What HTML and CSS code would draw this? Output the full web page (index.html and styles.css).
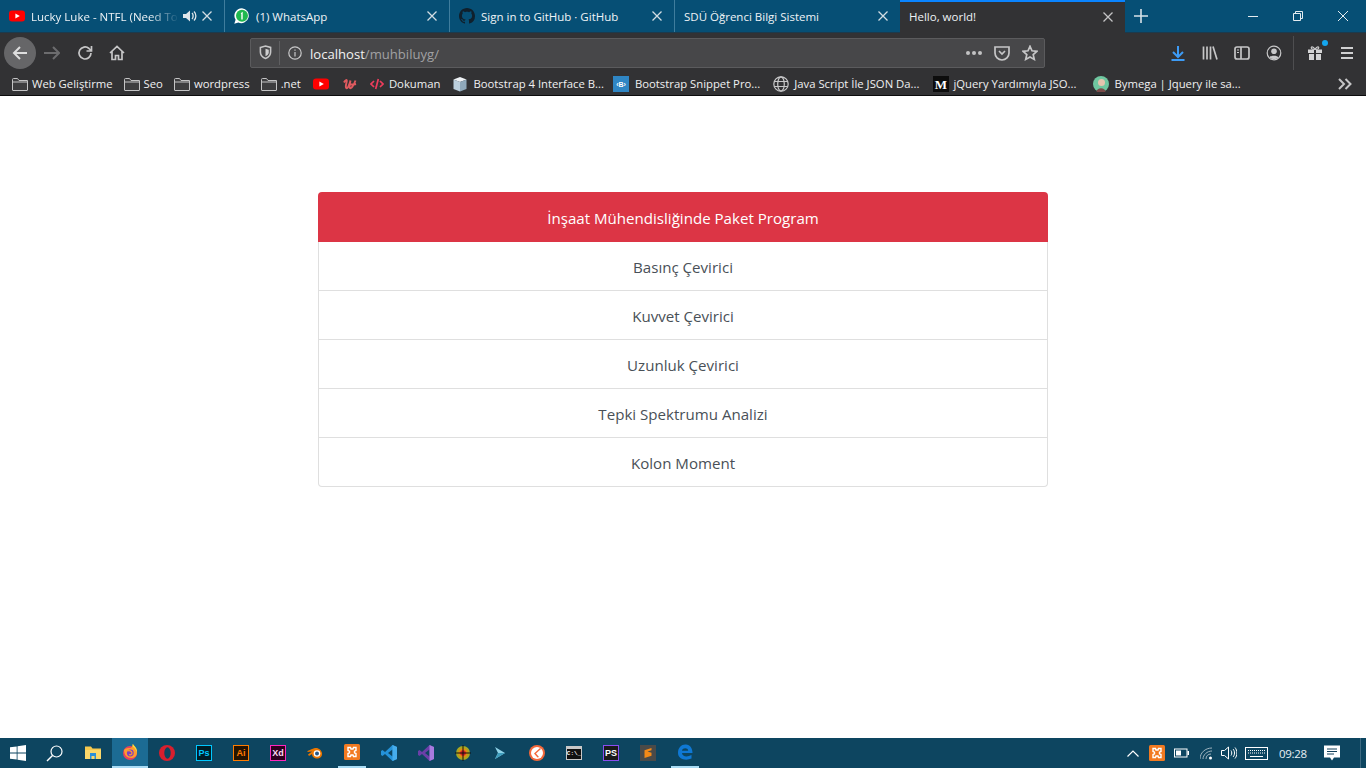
FILE: index.html
```html
<!DOCTYPE html>
<html lang="tr">
<head>
<meta charset="utf-8">
<title>Hello, world!</title>
<link rel="stylesheet" href="styles.css">
</head>
<body>
<header class="browser">
  <div class="tabstrip">
    <div class="tab">
      <svg class="ico16" viewBox="0 0 16 16"><rect y="2.500" width="16" height="11" rx="3" fill="#f00"/><path d="M6.400 5.500v5L10.800 8z" fill="#fff"/></svg>
      <span class="tab-title fade">Lucky Luke - NTFL (Need To</span>
      <svg class="speaker" viewBox="0 0 14 12"><path d="M0 4h3l4-3.500v11L3 8H0z" fill="#dfe6ea"/><path d="M9 3c1.500 1.500 1.500 4.500 0 6M11 1.500c2.500 2.500 2.500 6.500 0 9" fill="none" stroke="#dfe6ea" stroke-width="1.300"/></svg>
      <svg class="close" viewBox="0 0 10 10"><path d="M.5.500l9 9M9.500.500l-9 9"/></svg>
    </div>
    <div class="tab">
      <svg class="ico16" viewBox="0 0 16 16"><path d="M8 .2a7.500 7.500 0 0 0-6.400 11.500L.3 15.700l4.100-1.100A7.500 7.500 0 1 0 8 .2z" fill="#fff"/><circle cx="8" cy="7.700" r="6" fill="#1fb84f"/><path d="M6.700 5.300L8.700 3.800v7.800H7.300V5.900z" fill="#fff"/></svg>
      <span class="tab-title">(1) WhatsApp</span>
      <svg class="close" viewBox="0 0 10 10"><path d="M.5.500l9 9M9.500.500l-9 9"/></svg>
    </div>
    <div class="tab">
      <svg class="ico16" viewBox="0 0 16 16"><path fill="#10202c" d="M8 0C3.580 0 0 3.580 0 8c0 3.540 2.290 6.530 5.470 7.590.4.070.55-.17.55-.38 0-.19-.01-.82-.01-1.490-2.010.37-2.530-.49-2.690-.94-.09-.23-.48-.94-.82-1.130-.28-.15-.68-.52-.01-.53.630-.01 1.080.58 1.230.82.720 1.210 1.870.87 2.330.66.070-.52.280-.87.510-1.070-1.780-.2-3.640-.89-3.640-3.950 0-.87.310-1.590.82-2.150-.08-.2-.36-1.020.08-2.120 0 0 .67-.21 2.200.82.640-.18 1.320-.27 2-.27s1.360.09 2 .27c1.530-1.040 2.200-.82 2.200-.82.440 1.100.16 1.920.08 2.120.51.560.82 1.270.82 2.150 0 3.070-1.870 3.750-3.650 3.950.29.250.54.730.54 1.480 0 1.070-.01 1.930-.01 2.200 0 .21.150.46.550.38A8.010 8.010 0 0 0 16 8c0-4.420-3.580-8-8-8z"/></svg>
      <span class="tab-title">Sign in to GitHub · GitHub</span>
      <svg class="close" viewBox="0 0 10 10"><path d="M.5.500l9 9M9.500.500l-9 9"/></svg>
    </div>
    <div class="tab">
      <span class="tab-title">SDÜ Öğrenci Bilgi Sistemi</span>
      <svg class="close" viewBox="0 0 10 10"><path d="M.5.500l9 9M9.500.500l-9 9"/></svg>
    </div>
    <div class="tab tab-active">
      <span class="tab-title">Hello, world!</span>
      <svg class="close" viewBox="0 0 10 10"><path d="M.5.500l9 9M9.500.500l-9 9"/></svg>
    </div>
    <svg class="newtab" viewBox="0 0 14 14"><path d="M7 0v14M0 7h14"/></svg>
    <div class="winctl">
      <svg class="winbtn" viewBox="0 0 10 10"><path d="M0 5.500h10"/></svg>
      <svg class="winbtn" viewBox="0 0 10 10"><path d="M.5 2.500h7v7h-7zM2.500 2.500v-2h7v7h-2"/></svg>
      <svg class="winbtn" viewBox="0 0 10 10"><path d="M0 0l10 10M10 0L0 10"/></svg>
    </div>
  </div>

  <nav class="toolbar">
    <div class="tool tool-back"><svg class="ico16" viewBox="0 0 16 16"><path class="ln-w" d="M15 8H2M8 2L2 8l6 6"/></svg></div>
    <div class="tool"><svg class="ico16" viewBox="0 0 16 16"><path class="ln-dim" d="M0 8h15M9 2l6 6-6 6"/></svg></div>
    <div class="tool tool-nudge"><svg class="ico16" viewBox="0 0 16 16"><path class="ln" d="M14 8a6 6 0 1 1-2-4.500L14 5.500M14.500 1v5h-5"/></svg></div>
    <div class="tool tool-nudge"><svg class="ico16" viewBox="0 0 16 16"><path class="ln" d="M1 8l7-6.500L15 8M3 6.500V14.500h3.500v-4h3v4H13V6.500"/></svg></div>
    <div class="urlbar">
      <svg class="url-shield" viewBox="0 0 14 16"><path class="ln" d="M1.500 2.500L7 1l5.500 1.500v5c0 3.500-2.500 6-5.500 7-3-1-5.500-3.500-5.500-7z"/><path d="M7 4l3.500 1v3c0 1.800-1.500 3.200-3.500 4z" fill="#cfcfd0"/></svg>
      <span class="url-sep"></span>
      <svg class="url-info" viewBox="0 0 14 14"><circle class="ln-thin" cx="7" cy="7" r="6.200"/><path class="ln-thin" d="M7 6v4.500M7 3.500v1.300"/></svg>
      <span class="url-text">localhost<span class="url-path">/muhbiluyg/</span></span>
      <span class="url-dots"><i></i><i></i><i></i></span>
      <svg class="ico16 url-pocket" viewBox="0 0 16 16"><path class="ln" d="M1 2h14v6a7 7 0 0 1-14 0z"/><path class="ln" d="M5 6l3 3 3-3"/></svg>
      <svg class="ico16 url-star" viewBox="0 0 16 16"><path class="ln" d="M8 1.300l2 4.500 4.900.5-3.700 3.300 1.100 4.800L8 12l-4.300 2.400 1.100-4.800L1.100 6.300 6 5.800z"/></svg>
    </div>
    <div class="tool-right">
      <div class="tool"><svg class="ico16" viewBox="0 0 16 16"><path class="ln-blue" d="M8 1v10M3 7l5 5 5-5M1.500 15h13"/></svg></div>
      <div class="tool"><svg class="ico16" viewBox="0 0 16 16"><path class="ln" d="M1.500 1.500v13M5 1.500v13M8.500 1.500v13M11 1.500l4 13"/></svg></div>
      <div class="tool"><svg class="ico16" viewBox="0 0 16 16"><rect class="ln" x="1" y="2" width="14" height="12" rx="2"/><path class="ln" d="M7 2v12"/><path class="ln-thin" d="M3 5h2M3 7.500h2"/></svg></div>
      <div class="tool"><svg class="ico16" viewBox="0 0 16 16"><circle class="ln-thin" cx="8" cy="8" r="6.800"/><circle cx="8" cy="6.300" r="2.800" fill="#c9c9ca"/><path d="M3.500 12.500c1-2.500 8-2.500 9 0-2 2-7 2-9 0z" fill="#c9c9ca"/></svg></div>
      <span class="tool-sep"></span>
      <div class="tool"><svg class="ico16" viewBox="0 0 16 16"><path d="M1 4.500h6v3.500H1zM9 4.500h6v3.500H9zM2 9h5v6H2zM9 9h5v6H9z" fill="#d4d4d5"/><path class="ln-thin" d="M8 4.500C6 1 3.500 1.500 4.500 3.500c.5 1 2 1 3.500 1zm0 0c2-3.500 4.500-3 3.500-1-.5 1-2 1-3.500 1z"/></svg><span class="gift-dot"></span></div>
      <div class="tool"><svg class="ico16" viewBox="0 0 16 16"><path class="ln-thick" d="M2 3h12M2 8h12M2 13h12"/></svg></div>
    </div>
  </nav>

  <div class="bookmarks">
    <a class="bm"><svg class="folder" viewBox="0 0 16 14"><path class="fold" d="M.5 2.500V13a.5.5 0 0 0 .5.5h14a.5.5 0 0 0 .5-.5V3.500H7L5.500 1.500H1.500a1 1 0 0 0-1 1zM.5 5h15"/></svg>Web Geliştirme</a>
    <a class="bm"><svg class="folder" viewBox="0 0 16 14"><path class="fold" d="M.5 2.500V13a.5.5 0 0 0 .5.5h14a.5.5 0 0 0 .5-.5V3.500H7L5.500 1.500H1.500a1 1 0 0 0-1 1zM.5 5h15"/></svg>Seo</a>
    <a class="bm"><svg class="folder" viewBox="0 0 16 14"><path class="fold" d="M.5 2.500V13a.5.5 0 0 0 .5.5h14a.5.5 0 0 0 .5-.5V3.500H7L5.500 1.500H1.500a1 1 0 0 0-1 1zM.5 5h15"/></svg>wordpress</a>
    <a class="bm"><svg class="folder" viewBox="0 0 16 14"><path class="fold" d="M.5 2.500V13a.5.5 0 0 0 .5.5h14a.5.5 0 0 0 .5-.5V3.500H7L5.500 1.500H1.500a1 1 0 0 0-1 1zM.5 5h15"/></svg>.net</a>
    <a class="bm bm-yt"><svg class="ico16" viewBox="0 0 16 16"><rect y="2.500" width="16" height="11" rx="3" fill="#f00"/><path d="M6.400 5.500v5L10.800 8z" fill="#fff"/></svg></a>
    <a class="bm bm-u"><svg class="ico14" viewBox="0 0 14 14"><path d="M1 5.500C2 3.500 4 2 3.800 4S2 9.500 3.200 11 6.500 7.500 7.500 3.500c-.5 3-1.500 6.500-.5 7.500s3.500-2 5.500-7.500M7.500 7.500c2 0 4 0 5.500-.5" fill="none" stroke="#e05a5f" stroke-width="1.900"/></svg></a>
    <a class="bm bm-tight bm-doc"><svg class="ico14" viewBox="0 0 14 14"><path d="M4 4L1 7l3 3M10 4l3 3-3 3" fill="none" stroke="#ee3d5c" stroke-width="1.700"/><path d="M8.300 2l-2.600 10" fill="none" stroke="#ee3d5c" stroke-width="1.700"/></svg>Dokuman</a>
    <a class="bm bm-tight bm-cube"><svg class="ico16" viewBox="0 0 16 16"><path d="M8 1l6.500 2.500L8 6 1.500 3.500z" fill="#eef2f5"/><path d="M1.500 3.500L8 6v9.500L1.500 13z" fill="#bcd0de"/><path d="M14.500 3.500L8 6v9.500l6.500-2.500z" fill="#8fa9bb"/></svg>Bootstrap 4 Interface B...</a>
    <a class="bm bm-wide bm-snip"><svg class="ico16" viewBox="0 0 16 16"><rect width="16" height="16" fill="#2f86c4"/><text x="8" y="11" class="b-glyph" text-anchor="middle">‹B›</text></svg>Bootstrap Snippet Pro...</a>
    <a class="bm bm-tight bm-js"><svg class="ico16" viewBox="0 0 16 16"><g fill="none" stroke="#c8c8c9" stroke-width="1.200"><circle cx="8" cy="8" r="7.200"/><ellipse cx="8" cy="8" rx="3.300" ry="7.200"/><path d="M1.300 5.500h13.400M1.300 10.500h13.400"/></g></svg>Java Script İle JSON Da...</a>
    <a class="bm bm-jq"><svg class="ico16" viewBox="0 0 16 16"><rect width="16" height="16" fill="#0d0d0d"/><text x="8" y="12.500" class="m-glyph" text-anchor="middle">M</text></svg>jQuery Yardımıyla JSO...</a>
    <a class="bm bm-wide bm-by"><svg class="ico16" viewBox="0 0 16 16"><circle cx="8" cy="8" r="8" fill="#6fc7a0"/><circle cx="8.500" cy="6.500" r="3.500" fill="#e6c4ae"/><path d="M3.500 16c0-5 9-5 9 0z" fill="#7a4a48"/></svg>Bymega | Jquery ile sa...</a>
    <svg class="bm-more" viewBox="0 0 14 12"><path d="M1 1l5 5-5 5M7.500 1l5 5-5 5" fill="none" stroke="#c6c6c7" stroke-width="2"/></svg>
  </div>
</header>

<main class="page">
  <section class="panel">
    <h1 class="panel-head">İnşaat Mühendisliğinde Paket Program</h1>
    <div class="panel-body">
      <a class="panel-row">Basınç Çevirici</a>
      <a class="panel-row">Kuvvet Çevirici</a>
      <a class="panel-row">Uzunluk Çevirici</a>
      <a class="panel-row">Tepki Spektrumu Analizi</a>
      <a class="panel-row">Kolon Moment</a>
    </div>
  </section>
</main>

<footer class="taskbar">
  <div class="tb-app tb-shift"><svg class="ico16" viewBox="0 0 16 16"><path d="M0 2.300l6.700-.9v6.200H0zM7.500 1.300L16 0v7.600H7.500zM0 8.400h6.700v6.200L0 13.700zM7.500 8.400H16V16l-8.500-1.300z" fill="#fff"/></svg></div>
  <div class="tb-app tb-shift"><svg class="ico17" viewBox="0 0 17 17"><circle cx="10.500" cy="6.500" r="5.500" fill="none" stroke="#fff" stroke-width="1.200"/><path d="M6.500 10.500L1 16" stroke="#fff" stroke-width="1.500"/></svg></div>
  <div class="tb-app"><svg class="ico16" viewBox="0 0 16 16"><path d="M0 1.500h6l1.500 2H16V14H0z" fill="#f6c94e"/><path d="M0 5h16v9H0z" fill="#fbd86b"/><path d="M5 8h6v6H9.500v-3h-3v3H5z" fill="#2a8fd8"/></svg></div>
  <div class="tb-app tb-active"><svg class="ico16" viewBox="0 0 16 16"><circle cx="8" cy="9" r="7" fill="#e8415e"/><path d="M2 6c0 5 3 8 7 8 3 0 6-2 6-5 0-4-3-7-4-9 0 2-1 3-2.500 4C6 4 4 4 2 6z" fill="#ff9a2e"/><path d="M10.500 0c3 2.500 5 5 4.500 9-.5-2.500-2-5-4.500-6.500z" fill="#ffd93b"/><circle cx="8.300" cy="9" r="3.400" fill="#7a3fc4"/><path d="M5 7c2-1 5 0 5 2s-2 2-3 1.500" fill="none" stroke="#ff9a2e" stroke-width="1.200"/></svg></div>
  <div class="tb-app"><svg class="ico16" viewBox="0 0 16 16"><circle cx="8" cy="8" r="8" fill="#d81f2e"/><ellipse cx="8.500" cy="8" rx="3.200" ry="5.800" fill="#0d4560"/></svg></div>
  <div class="tb-app"><span class="badge badge-ps">Ps</span></div>
  <div class="tb-app"><span class="badge badge-ai">Ai</span></div>
  <div class="tb-app"><span class="badge badge-xd">Xd</span></div>
  <div class="tb-app"><svg class="ico16" viewBox="0 0 16 16"><path d="M9 3c-1 0-3 .5-4 1L.5 6v1L5 6.500 1 9.500 2 11l3-2c0 3 3 5 6 4.500s4.500-3 4-5.500S12 3 9 3z" fill="#ea7600"/><circle cx="10" cy="8.500" r="3.300" fill="#fff"/><circle cx="10" cy="8.500" r="2" fill="#265787"/></svg></div>
  <div class="tb-app tb-open"><svg class="ico16" viewBox="0 0 16 16"><rect width="16" height="16" rx="1.500" fill="#f27a21"/><path d="M4 3.500h2.500l.5 1.500h2l.5-1.500H12v3l-1.500.7v1.600l1.500.7v3H9.500L9 11H7l-.5 1.500H4v-3l1.500-.7V7.200L4 6.500z" fill="none" stroke="#fff" stroke-width="1.400"/></svg></div>
  <div class="tb-app"><svg class="ico16" viewBox="0 0 16 16"><path d="M11.500 0L16 2v12l-4.500 2L4 9l-2.500 2L0 10V6l1.500-1L4 7z" fill="#2492d8"/><path d="M11.500 4.500L7 8l4.500 3.500z" fill="#0d4560"/><path d="M11.500 0L16 2v12l-4.500 2z" fill="#46adec"/></svg></div>
  <div class="tb-app"><svg class="ico16" viewBox="0 0 16 16"><path d="M11.500 0L16 2v12l-4.500 2L4 9l-2.500 2L0 10V6l1.500-1L4 7z" fill="#6a3fa8"/><path d="M11.500 4.500L7 8l4.500 3.500z" fill="#0d4560"/><path d="M11.500 0L16 2v12l-4.500 2z" fill="#a77be0"/></svg></div>
  <div class="tb-app"><svg class="ico16" viewBox="0 0 16 16"><circle cx="8" cy="8" r="7" fill="#a8a820"/><circle cx="8" cy="8" r="4.800" fill="#e28a12"/><circle cx="8" cy="8" r="2.800" fill="#d81f26"/><path d="M0 8h16M8 0v16" stroke="#111" stroke-width="1"/></svg></div>
  <div class="tb-app"><svg class="ico-cli" viewBox="0 0 10 12"><path d="M0 0l10 6-10 6 3-6z" fill="#8fd3e8"/><path d="M0 12l10-6-7 0z" fill="#3f9dbd"/></svg></div>
  <div class="tb-app"><svg class="ico16" viewBox="0 0 16 16"><circle cx="8" cy="8" r="8" fill="#f4683a"/><circle cx="8" cy="8" r="6" fill="#fff"/><path d="M12 4L7 8.500l3 3.500-1.500.5-3.500-4 6-5.500z" fill="#f4683a"/></svg></div>
  <div class="tb-app"><span class="badge-cmd"><span class="badge-cmd-txt">C:\_</span></span></div>
  <div class="tb-app"><span class="badge badge-php">PS</span></div>
  <div class="tb-app"><svg class="ico16" viewBox="0 0 16 16"><rect width="16" height="16" fill="#4a4a48"/><path d="M11.500 3L4.500 5.200v2.500l7 2.300V7.700L7.500 6.500l4-1.200zM4.500 13l7-2.200V8.500L4.500 6.200z" fill="#f48a17"/></svg></div>
  <div class="tb-app tb-open"><svg class="ico16" viewBox="0 0 16 16"><path d="M1 9C1 3 5 0 9 .5s6.500 3.500 6.500 8.500H5c.2 3.500 5 4.500 9.500 2v3.500C9 17 1 15.500 1 9zm4-2.300h6.200C11 3.500 5.500 3.500 5 6.700z" fill="#0f78d4"/></svg></div>
  <div class="tray">
    <svg class="tray-up" viewBox="0 0 12 7"><path d="M.5 6.500L6 1l5.500 5.500" fill="none" stroke="#fff" stroke-width="1.200"/></svg>
    <svg class="ico16 tray-xampp" viewBox="0 0 16 16"><rect width="16" height="16" rx="1.500" fill="#f27a21"/><path d="M4 3.500h2.500l.5 1.500h2l.5-1.500H12v3l-1.500.7v1.600l1.500.7v3H9.500L9 11H7l-.5 1.500H4v-3l1.500-.7V7.200L4 6.500z" fill="none" stroke="#fff" stroke-width="1.400"/></svg>
    <svg class="tray-bat" viewBox="0 0 15 10"><rect x=".5" y="1" width="12.500" height="8" fill="none" stroke="#fff"/><rect x="2" y="2.500" width="5" height="5" fill="#fff"/><rect x="13.500" y="3" width="1.500" height="4" fill="#fff"/></svg>
    <svg class="tray-wifi" viewBox="0 0 13 13"><g fill="none" stroke="#9fb4c0"><path d="M0 12C0 6 5 1 12 1M3 12c0-4 4-8 9-8M6 12c0-3 2-5 5-5"/></g><circle cx="10.500" cy="11" r="1.500" fill="#fff"/></svg>
    <svg class="tray-vol" viewBox="0 0 16 14"><path d="M.5 4.500h3L7.500 1v12l-4-3.500h-3z" fill="none" stroke="#fff"/><path d="M10 4.500c1 1.500 1 3.500 0 5M12 3c2 2 2 6 0 8M14 1.500c2.500 3 2.500 8 0 11" fill="none" stroke="#fff"/></svg>
    <svg class="tray-kbd" viewBox="0 0 23 13"><rect x=".5" y=".5" width="22" height="12" fill="none" stroke="#fff"/><path d="M3 3.500h17M3 6h17" stroke="#fff" stroke-dasharray="1 1"/><path d="M5 9.500h13" stroke="#fff"/></svg>
    <span class="tray-clock">09:28</span>
    <svg class="ico16 tray-note" viewBox="0 0 16 16"><path d="M0 .5h16v12H10l-2 3-2-3H0z" fill="#fff"/><path d="M3 4h10M3 6.500h10M3 9h7" stroke="#12405a"/></svg>
    <span class="tray-edge"></span>
  </div>
</footer>
</body>
</html>
```

FILE: styles.css
```css
* { box-sizing: border-box; }
html, body { margin: 0; height: 100%; }
body {
  width: 1366px;
  height: 768px;
  overflow: hidden;
  display: flex;
  flex-direction: column;
  background: #fff;
  font-family: "Open Sans", "Liberation Sans", sans-serif;
}
svg { display: block; flex: none; }
.ico16 { width: 16px; height: 16px; }
.ico14 { width: 14px; height: 14px; }
.ico17 { width: 17px; height: 17px; }
.ln, .ln-w, .ln-dim, .ln-blue, .ln-thin, .ln-thick { fill: none; }
.ln { stroke: #c6c6c7; stroke-width: 1.700; }
.ln-w { stroke: #dedede; stroke-width: 2; }
.ln-dim { stroke: #6c6c6e; stroke-width: 2; }
.ln-blue { stroke: #3d9bf5; stroke-width: 2; }
.ln-thin { stroke: #c9c9ca; stroke-width: 1.200; }
.ln-thick { stroke: #d0d0d1; stroke-width: 2; }

/* browser chrome */
.browser { flex: none; background: #323234; height: 96px; border-bottom: 1px solid #0c0c0d; }
.tabstrip { display: flex; align-items: stretch; height: 33px; background: #064f75; border-bottom: 1px solid #1b3a4d; }
.tab {
  width: 225px;
  display: flex;
  align-items: center;
  padding: 2px 12px 2px 9px;
  border-right: 1px solid #3f7d9d;
  color: #eef3f6;
  font-size: 11.500px;
}
.tab:nth-child(4) { border-right: 0; }
.tab > .ico16 { margin-right: 6px; }
.tab-active { margin-bottom: -1px; background: #323234; border-top: 2px solid #0a84ff; border-right: 0; padding-top: 0; }
.tab-title { flex: 1; white-space: nowrap; overflow: hidden; }
.fade {
  flex: none;
  width: 148px;
  -webkit-mask-image: linear-gradient(90deg, #000 80%, transparent);
  mask-image: linear-gradient(90deg, #000 80%, transparent);
}
.speaker { width: 14px; height: 12px; margin: 0 5px 0 4px; }
.close { width: 10px; height: 10px; fill: none; stroke: #d3dde3; stroke-width: 1.300; }
.tab-active .close { stroke: #c4c4c5; }
.newtab { width: 14px; height: 14px; margin: 9px 0 0 9px; fill: none; stroke: #d7e2e8; stroke-width: 1.600; }
.winctl { margin-left: auto; display: flex; padding: 11px 18px 0 0; gap: 35px; }
.winbtn { width: 10px; height: 10px; fill: none; stroke: #e4ecf0; stroke-width: 1; }

.toolbar { display: flex; align-items: center; height: 38px; padding: 1px 3px 0 4px; }
.tool { width: 32px; height: 32px; display: flex; align-items: center; justify-content: center; position: relative; }
.tool-nudge { padding-left: 2px; }
.tool-back { background: #666668; border-radius: 50%; }
.urlbar {
  width: 795px;
  height: 30px;
  margin-left: 118px;
  display: flex;
  align-items: center;
  background: #474749;
  border: 1px solid #5b5b5d;
  border-radius: 2px;
  padding-left: 8px;
  color: #f2f2f2;
  font-size: 13.100px;
}
.url-shield { width: 13px; height: 15px; }
.url-sep { width: 1px; height: 24px; background: #5f5f61; margin: 0 8px 0 7px; }
.url-info { width: 14px; height: 14px; margin-right: 8px; }
.url-text { flex: 1; margin-top: 2px; white-space: nowrap; }
.url-path { color: #a1a1a3; }
.url-dots { display: flex; gap: 2px; margin-right: 12px; }
.url-dots i { width: 4px; height: 4px; border-radius: 50%; background: #c2c2c3; display: block; }
.url-pocket { margin-right: 12px; }
.url-star { margin-right: 6px; }
.tool-right { margin-left: auto; display: flex; align-items: center; }
.tool-sep { width: 1px; height: 34px; background: #4e4e50; margin: 0 5px 0 3px; }
.gift-dot { position: absolute; top: 3px; right: 3px; width: 6px; height: 6px; border-radius: 50%; background: #14a6ee; }

.bookmarks { display: flex; align-items: center; height: 24px; padding: 1px 14px 0 12px; color: #f0f0f1; font-size: 11.300px; white-space: nowrap; }
.bm { display: flex; align-items: center; gap: 4px; margin-right: 11px; }
.bm-tight { gap: 5px; }
.bm-wide { gap: 6px; }
.bm-yt { margin-left: 1px; }
.bm-u { margin-left: 3px; }
.bm-doc { margin-left: 2px; }
.bm-cube { margin-left: 1px; }
.bm-snip { margin-left: -2px; }
.bm-js { margin-left: 2px; }
.bm-jq { margin-left: 3px; gap: 4px; }
.bm-by { margin-left: 5px; }
.folder { width: 16px; height: 14px; }
.fold { fill: #3d3d3f; stroke: #c4c4c5; stroke-width: 1; }
.b-glyph { font: 700 7px "Liberation Sans", sans-serif; fill: #fff; }
.m-glyph { font: 700 13px "Liberation Serif", serif; fill: #fff; }
.bm-more { width: 14px; height: 12px; margin-left: auto; }

/* page */
.page { flex: 1; background: #fff; padding-top: 96px; display: flex; justify-content: center; }
.panel { width: 730px; height: 295px; }
.panel-head {
  margin: 0;
  height: 50px;
  background: #dc3545;
  border-radius: 4px 4px 0 0;
  color: #fff;
  font-size: 15.100px;
  font-weight: 400;
  display: flex;
  align-items: center;
  justify-content: center;
  padding-top: 2px;
}
.panel-body {
  border: 1px solid #dfdfdf;
  border-top: 0;
  border-radius: 0 0 4px 4px;
}
.panel-row {
  height: 49px;
  display: flex;
  align-items: center;
  justify-content: center;
  color: #495057;
  font-size: 15.100px;
  border-bottom: 1px solid #dfdfdf;
  padding-top: 2px;
}
.panel-row:last-child { border-bottom: 0; height: 48px; }

/* taskbar */
.taskbar { flex: none; height: 30px; display: flex; gap: 1px; padding-left: 1px; background: #0d4560; color: #fff; }
.tb-app { width: 36px; display: flex; align-items: center; justify-content: center; }
.tb-shift { padding-right: 3px; }
.tb-active { background: #1c6b93; border-bottom: 2px solid #a9dcf5; }
.tb-open { border-bottom: 2px solid #a9dcf5; width: 28px; margin: 0 4px; }
.badge {
  width: 16px; height: 16px;
  display: flex; align-items: center; justify-content: center;
  font: 700 9px/1 "Liberation Sans", sans-serif;
  border: 1px solid;
}
.badge-ps { background: #001d26; color: #00c8ff; border-color: #00c8ff; }
.badge-ai { background: #261300; color: #ff7c00; border-color: #ff7c00; }
.badge-xd { background: #2e001f; color: #ffd9f2; border-color: #ff26be; }
.badge-php { background: #1a1a1a; color: #fff; border-color: #8a4df0; }
.badge-cmd { width: 16px; height: 14px; background: #111; border: 1px solid #c8c8c8; border-top-width: 3px; display: flex; align-items: center; justify-content: center; }
.badge-cmd-txt { font: 700 6px/1 "Liberation Mono", monospace; color: #fff; }
.ico-cli { width: 10px; height: 12px; }
.tray { margin-left: auto; display: flex; align-items: center; padding-right: 5px; }
.tray-up { width: 12px; height: 7px; margin-right: 10px; }
.tray-xampp { margin-right: 9px; }
.tray-bat { width: 15px; height: 10px; margin-right: 11px; }
.tray-wifi { width: 13px; height: 13px; margin-right: 8px; }
.tray-vol { width: 16px; height: 14px; margin-right: 8px; }
.tray-kbd { width: 23px; height: 13px; margin-right: 11px; }
.tray-clock { width: 27px; font-size: 11.500px; letter-spacing: -.3px; margin-right: 18px; white-space: nowrap; color: #e8f0f4; }
.tray-note { margin-right: 20px; }
.tray-edge { width: 1px; height: 30px; background: #3d6a82; }
```
